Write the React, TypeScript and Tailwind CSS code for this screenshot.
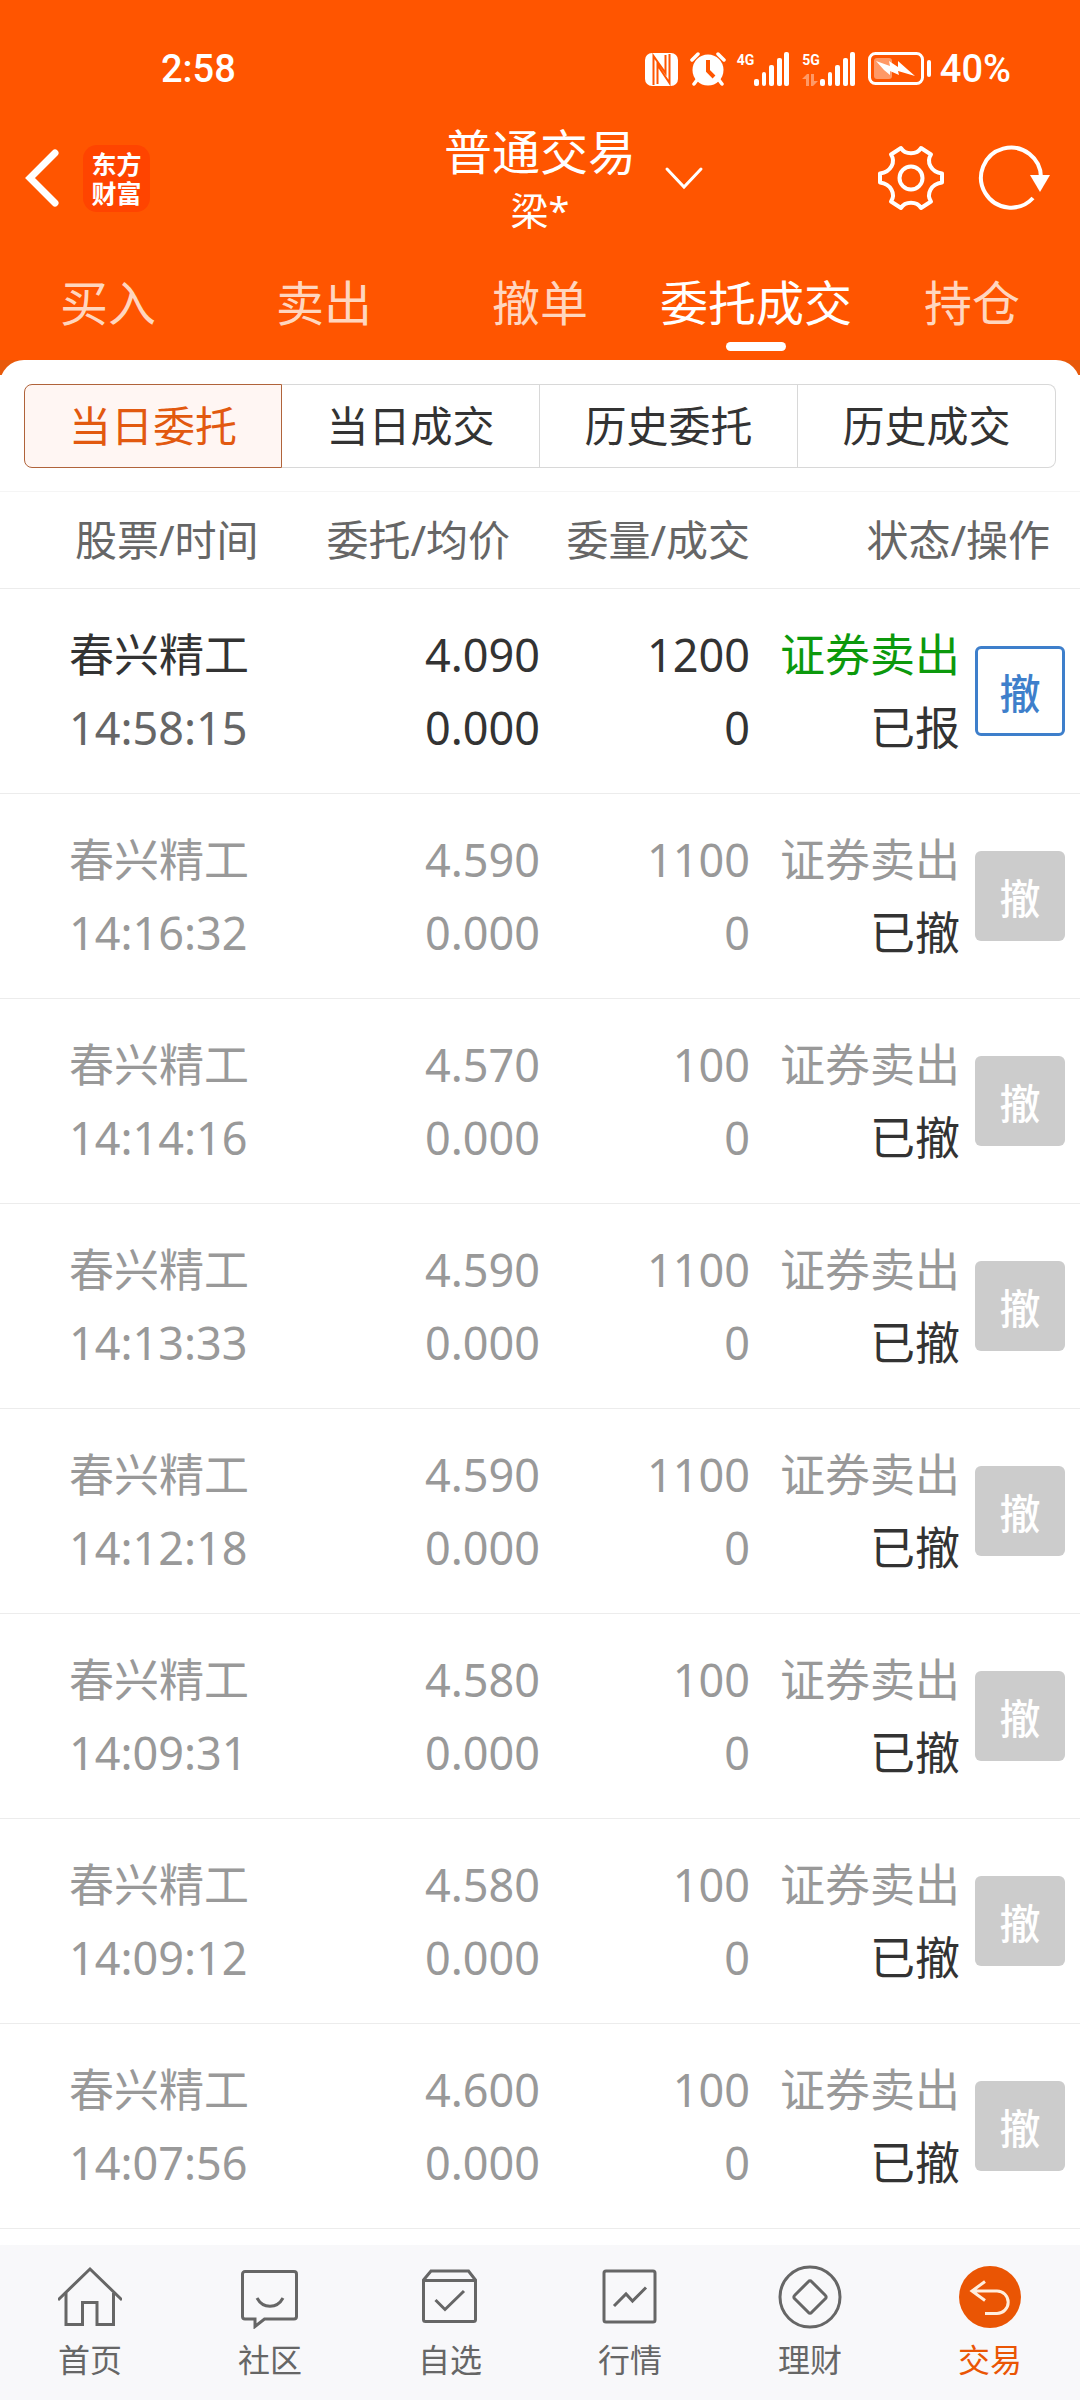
import React from "react";

const tabs = ["买入", "卖出", "撤单", "委托成交", "持仓"];
const segments = ["当日委托", "当日成交", "历史委托", "历史成交"];

const orders = [
  { time: "14:58:15", price: "4.090", qty: "1200", status: "已报", open: true },
  { time: "14:16:32", price: "4.590", qty: "1100", status: "已撤", open: false },
  { time: "14:14:16", price: "4.570", qty: "100", status: "已撤", open: false },
  { time: "14:13:33", price: "4.590", qty: "1100", status: "已撤", open: false },
  { time: "14:12:18", price: "4.590", qty: "1100", status: "已撤", open: false },
  { time: "14:09:31", price: "4.580", qty: "100", status: "已撤", open: false },
  { time: "14:09:12", price: "4.580", qty: "100", status: "已撤", open: false },
  { time: "14:07:56", price: "4.600", qty: "100", status: "已撤", open: false },
];

const navItems = [
  {
    label: "首页",
    icon: (
      <>
        <path d="M0 35 32 4l32 31" />
        <path d="M8 28v31.500h16.500V37.500h14.500v22h16.500V28" />
      </>
    ),
  },
  {
    label: "社区",
    icon: (
      <>
        <path d="M7 6.500h49a2.500 2.500 0 0 1 2.500 2.500v42.500a2.500 2.500 0 0 1-2.500 2.500H26.500L17 61.500V54H7a2.500 2.500 0 0 1-2.500-2.500V9A2.500 2.500 0 0 1 7 6.500Z" />
        <path d="M19 33c6 11 20 11 26 0" />
      </>
    ),
  },
  {
    label: "自选",
    icon: (
      <>
        <path d="M5.500 15 13 6h37.500l7 9v39.500a2 2 0 0 1-2 2h-48a2 2 0 0 1-2-2ZM5.500 15.500h52" />
        <path d="m17.500 35 9.500 9.500L46 26" />
      </>
    ),
  },
  {
    label: "行情",
    icon: (
      <>
        <rect x="6" y="6" width="51" height="51" rx="2" />
        <path d="m16 41 12-12 6.500 7L48 22.500" />
      </>
    ),
  },
  {
    label: "理财",
    icon: (
      <>
        <circle cx="32" cy="32" r="30" />
        <path d="M30.500 16.500a2 2 0 0 1 3 0l14 14a2 2 0 0 1 0 3l-14 14a2 2 0 0 1-3 0l-14-14a2 2 0 0 1 0-3Z" />
      </>
    ),
  },
  {
    label: "交易",
    active: true,
    icon: (
      <>
        <circle cx="32" cy="32" r="31" fill="#ea5504" stroke="none" />
        <path d="M27 16.500 14 26l13 9.500M14 26h25a11.200 11.200 0 0 1 0 22.400H27" stroke="#ffeede" />
      </>
    ),
  },
];

function SignalBars() {
  return (
    <svg width="36" height="34" viewBox="0 0 36 34" fill="#fff">
      <rect x="0" y="27" width="5" height="7" rx="2" />
      <rect x="8" y="20" width="4" height="14" rx="2" />
      <rect x="15" y="13" width="5" height="21" rx="2" />
      <rect x="23" y="6" width="5" height="28" rx="2" />
      <rect x="30" y="0" width="5" height="34" rx="2" />
    </svg>
  );
}

function StatusBar() {
  return (
    <div className="flex h-[120px] items-center justify-between pt-[18px] pl-[161px] pr-[69px] font-['Roboto',sans-serif] text-[38px] font-medium leading-none text-white">
      <span>2:58</span>
      <div className="flex items-center">
        <svg width="33" height="33" viewBox="0 0 33 33">
          <rect width="33" height="33" rx="7" fill="#fff" />
          <path d="M8.500 32V3l12 17V2M12.500 31V12L24.500 30V1" fill="none" stroke="#ff5500" strokeWidth="2" />
        </svg>
        <svg className="ml-3" width="36" height="34" viewBox="0 0 36 34">
          <circle cx="18" cy="18" r="15.500" fill="#fff" />
          <path d="m2 8 6-6M34 8l-6-6M7 28l-3 4M29 28l3 4" stroke="#fff" strokeWidth="3.500" strokeLinecap="round" />
          <path d="M18 8v11l6 6" fill="none" stroke="#ff5500" strokeWidth="4" />
        </svg>
        <div className="ml-[11px] flex">
          <span className="text-sm font-bold leading-4">4G</span>
          <SignalBars />
        </div>
        <div className="ml-3 flex">
          <div className="flex flex-col justify-between">
            <span className="text-sm font-bold leading-4">5G</span>
            <svg width="16" height="12" viewBox="0 0 16 12" fill="#fff" opacity="0.4">
              <path d="M0 5 5 0h2v12H4V5ZM16 7l-5 5H9V0h3v7Z" />
            </svg>
          </div>
          <SignalBars />
        </div>
        <svg className="ml-3" width="64" height="34" viewBox="0 0 64 34">
          <rect x="1.500" y="1.500" width="53" height="30" rx="6" fill="none" stroke="#fff" strokeWidth="3" />
          <rect x="6" y="6" width="18" height="21" rx="3" fill="#fff" opacity="0.4" />
          <rect x="59" y="8" width="4" height="17" rx="2" fill="#fff" />
          <path d="m8 9 14 5-1-5 9 6V9l9 8 8 7-17-5 1 4-9-4v4l-6-5Z" fill="#fff" />
        </svg>
        <span className="ml-2">40%</span>
      </div>
    </div>
  );
}

function TitleBar() {
  return (
    <div className="grid h-[116px] grid-cols-[1fr_auto_1fr] text-white">
      <div className="flex items-center">
        <button aria-label="返回" className="pl-6">
          <svg width="38" height="60" viewBox="0 0 38 60" fill="none" stroke="#fff" strokeWidth="7" strokeLinecap="round">
            <path d="M31 5 6 30l25 25" />
          </svg>
        </button>
        <div className="ml-[21px] flex h-[67px] w-[67px] items-center justify-center rounded-[14px] bg-[#ff4400]">
          <span className="w-[50px] font-['Noto_Sans_CJK_SC',sans-serif] text-[25px] font-bold leading-[29px] break-all">
            东方财富
          </span>
        </div>
      </div>
      <div className="text-center">
        <h1 className="text-5xl leading-[64px]">普通交易</h1>
        <p className="text-[38px] leading-[52px]">梁*</p>
      </div>
      <div className="flex items-center justify-between pl-7 pr-[30px]">
        <button aria-label="切换账户">
          <svg width="40" height="24" viewBox="0 0 40 24" fill="none" stroke="#fff" strokeWidth="3" strokeLinecap="round">
            <path d="m3 3 17 18L37 3" />
          </svg>
        </button>
        <div className="flex items-center gap-[33px]">
          <button aria-label="设置">
            <svg width="68" height="68" viewBox="0 0 68 68" fill="none" stroke="#fff" strokeWidth="4" strokeLinejoin="round">
              <path d="M24 4C28 11 40 11 44 4L54 10.500C49 18 54 28 65 29.500V38.500C54 40 49 50 54 57.500L44 64C40 57 28 57 24 64L14 57.500C19 50 14 40 3 38.500V29.500C14 28 19 18 14 10.500Z" />
              <circle cx="34" cy="34" r="11.500" />
            </svg>
          </button>
          <button aria-label="刷新">
            <svg width="72" height="68" viewBox="0 0 72 68" fill="none">
              <path d="M63 34A30 30 0 1 0 55 54" stroke="#fff" strokeWidth="4" />
              <path d="M52 31h20L62 48Z" fill="#fff" />
            </svg>
          </button>
        </div>
      </div>
    </div>
  );
}

function OrderTable() {
  return (
    <table className="w-full table-fixed border-collapse">
      <colgroup>
        <col className="w-[25%]" />
        <col className="w-[25%]" />
        <col className="w-[20%]" />
        <col className="w-[30%]" />
      </colgroup>
      <thead>
        <tr className="h-[97px] border-y border-t-[#f5f5f5] border-b-[#ececec] text-[42px] leading-[60px] text-[#666]">
          <th className="pl-[75px] text-left font-normal whitespace-nowrap">股票/时间</th>
          <th className="pr-[30px] text-right font-normal whitespace-nowrap">委托/均价</th>
          <th className="pr-1.5 text-right font-normal whitespace-nowrap">委量/成交</th>
          <th className="pr-[30px] text-right font-normal whitespace-nowrap">状态/操作</th>
        </tr>
      </thead>
      <tbody>
        {orders.map((item) => (
          <tr
            key={item.time}
            className={`h-[205px] border-b border-[#ececec] text-[45px] leading-[73px] ${item.open ? "text-[#333]" : "text-[#999]"}`}
          >
            <td className="pl-[69px] whitespace-nowrap">
              <div>春兴精工</div>
              <div className={item.open ? "text-[#666]" : ""}>{item.time}</div>
            </td>
            <td className="text-right">
              <div>{item.price}</div>
              <div>0.000</div>
            </td>
            <td className="pr-1.5 text-right">
              <div>{item.qty}</div>
              <div>0</div>
            </td>
            <td className="pr-[15px]">
              <div className="flex items-center justify-end gap-[15px]">
                <div className="text-right whitespace-nowrap">
                  <div className={item.open ? "text-[#0c990c]" : ""}>证券卖出</div>
                  <div className="text-[#333]">{item.status}</div>
                </div>
                <button
                  disabled={!item.open}
                  className={`h-[90px] w-[90px] shrink-0 rounded-md font-['Noto_Sans_CJK_SC',sans-serif] text-[41px] leading-[60px] font-medium ${
                    item.open ? "border-3 border-[#3e7fcb] text-[#3e7fcb]" : "bg-[#ccc] text-white"
                  }`}
                >
                  撤
                </button>
              </div>
            </td>
          </tr>
        ))}
      </tbody>
    </table>
  );
}

function BottomNav() {
  return (
    <nav className="mt-auto grid h-[156px] grid-cols-6 bg-[#f8f8fa]">
      {navItems.map((item) => (
        <a
          key={item.label}
          href="#"
          className={`flex flex-col items-center pt-5 text-[32px] leading-[62px] ${item.active ? "text-[#ea5504]" : "text-[#666]"}`}
        >
          <svg width="64" height="64" viewBox="0 0 64 64" fill="none" stroke="currentColor" strokeWidth="3">
            {item.icon}
          </svg>
          <span>{item.label}</span>
        </a>
      ))}
    </nav>
  );
}

function App() {
  return (
    <div className="flex min-h-screen flex-col bg-white font-['Noto_Sans','Noto_Sans_CJK_SC',sans-serif]">
      <header className="bg-[#ff5500]">
        <StatusBar />
        <TitleBar />
        <nav className="grid h-[124px] grid-cols-5">
          {tabs.map((item) => (
            <a
              key={item}
              href="#"
              className={`flex flex-col items-center pt-[35px] text-5xl leading-[64px] whitespace-nowrap ${
                item === "委托成交" ? "text-white" : "text-[#ffd6bf]"
              }`}
            >
              {item}
              {item === "委托成交" && <span className="mt-[7px] h-[9px] w-[60px] rounded-full bg-white" />}
            </a>
          ))}
        </nav>
        <div className="h-[15px] overflow-hidden bg-[#e8590a]">
          <div className="h-8 rounded-t-3xl bg-white" />
        </div>
      </header>
      <main className="pt-[9px] pb-4">
        <div className="mx-6 mb-[23px] grid h-[84px] grid-cols-4">
          {segments.map((item, key) => (
            <button
              key={item}
              className={`border text-[42px] leading-[60px] whitespace-nowrap first:rounded-l-lg last:rounded-r-lg ${
                key === 0
                  ? "border-[#b0633a] bg-[#fff6f3] text-[#e2590f]"
                  : "border-l-0 border-[#d8d8d8] text-[#333]"
              }`}
            >
              {item}
            </button>
          ))}
        </div>
        <OrderTable />
      </main>
      <BottomNav />
    </div>
  );
}

export default App;
